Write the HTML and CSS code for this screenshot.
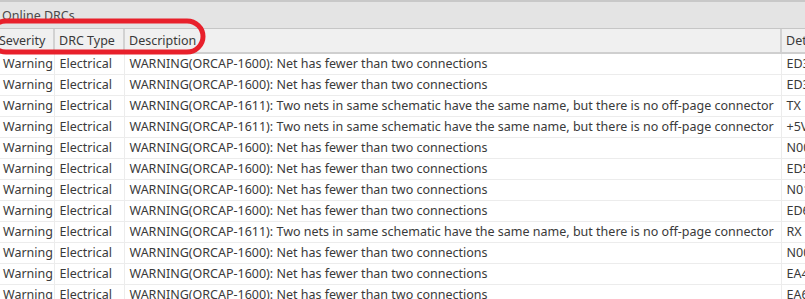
FILE: index.html
```html
<!DOCTYPE html>
<html lang="en">
  <head>
    <meta charset="UTF-8" />
    <title>Online DRCs</title>
    <link rel="stylesheet" href="styles.css">
  </head>
  <body>
    <div class="panel">
      <div class="panel-title">Online DRCs</div>
      <table class="drc-table">
        <thead>
          <tr>
            <th class="col-sev">Severity</th>
            <th class="col-type">DRC Type</th>
            <th class="col-desc">Description</th>
            <th class="col-det">Details</th>
          </tr>
        </thead>
        <tbody>
          <tr><td>Warning</td><td>Electrical</td><td>WARNING(ORCAP-1600): Net has fewer than two connections</td><td>ED30</td></tr>
          <tr><td>Warning</td><td>Electrical</td><td>WARNING(ORCAP-1600): Net has fewer than two connections</td><td>ED31</td></tr>
          <tr><td>Warning</td><td>Electrical</td><td>WARNING(ORCAP-1611): Two nets in same schematic have the same name, but there is no off-page connector</td><td>TX</td></tr>
          <tr><td>Warning</td><td>Electrical</td><td>WARNING(ORCAP-1611): Two nets in same schematic have the same name, but there is no off-page connector</td><td>+5V</td></tr>
          <tr><td>Warning</td><td>Electrical</td><td>WARNING(ORCAP-1600): Net has fewer than two connections</td><td>N00412</td></tr>
          <tr><td>Warning</td><td>Electrical</td><td>WARNING(ORCAP-1600): Net has fewer than two connections</td><td>ED50</td></tr>
          <tr><td>Warning</td><td>Electrical</td><td>WARNING(ORCAP-1600): Net has fewer than two connections</td><td>N01267</td></tr>
          <tr><td>Warning</td><td>Electrical</td><td>WARNING(ORCAP-1600): Net has fewer than two connections</td><td>ED60</td></tr>
          <tr><td>Warning</td><td>Electrical</td><td>WARNING(ORCAP-1611): Two nets in same schematic have the same name, but there is no off-page connector</td><td>RX</td></tr>
          <tr><td>Warning</td><td>Electrical</td><td>WARNING(ORCAP-1600): Net has fewer than two connections</td><td>N00689</td></tr>
          <tr><td>Warning</td><td>Electrical</td><td>WARNING(ORCAP-1600): Net has fewer than two connections</td><td>EA40</td></tr>
          <tr><td>Warning</td><td>Electrical</td><td>WARNING(ORCAP-1600): Net has fewer than two connections</td><td>EA60</td></tr>
        </tbody>
      </table>

      <!-- red marker drawn over the column headers -->
      <svg class="marker" width="220" height="44" viewBox="0 0 220 44">
        <rect x="-10" y="6" width="213" height="31" rx="16" ry="16"
              fill="none" stroke="#e8202b" stroke-width="5" />
      </svg>
    </div>
  </body>
</html>
```

FILE: styles.css
```css
* {
  margin: 0;
  padding: 0;
  box-sizing: border-box;
}

body {
  background: #ffffff;
  overflow: hidden;
  width: 805px;
  height: 299px;
  font-family: "Noto Sans", "Open Sans", sans-serif;
  font-size: 12.5px;
  color: #3a3a3a;
}

.panel {
  position: relative;
  border-top: 2px solid #c8c8c8;
}

.panel-title {
  height: 27px;
  background: #e4e4e4;
  color: #4a4a4a;
  padding: 5px 0 0 2px;
  line-height: 17px;
  border-bottom: 1px solid #c6c6c6;
}

.drc-table {
  border-collapse: collapse;
  table-layout: fixed;
  width: 860px;
  white-space: nowrap;
}

.drc-table th {
  height: 24px;
  background: #f0f0f0;
  font-weight: normal;
  text-align: left;
  padding: 0 4px;
  border-right: 2px solid #d2d2d2;
  border-bottom: 2px solid #cfcfcf;
  overflow: hidden;
}

.drc-table td {
  height: 21px;
  padding: 0 4px 0 5px;
  border-right: 1px solid #ececec;
  border-bottom: 1px solid #ececec;
  overflow: hidden;
}

.col-sev { width: 54px; }
.col-type { width: 70px; }
.col-desc { width: 657px; }
.col-det { width: 79px; }

.drc-table th.col-sev {
  padding-left: 0;
  text-indent: -1px;
}

.drc-table td:first-child {
  padding-left: 3px;
}

.marker {
  position: absolute;
  left: 0;
  top: 13px;
}
```
